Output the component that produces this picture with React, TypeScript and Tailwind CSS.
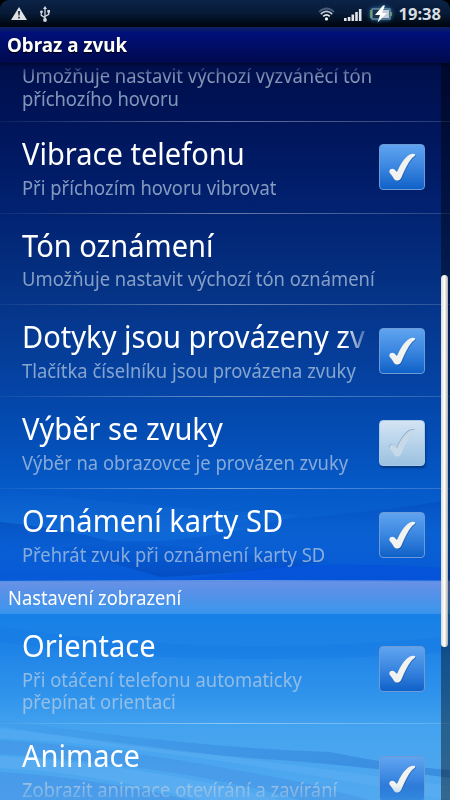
import React from "react";

type CheckState = "on" | "off";

function Wallpaper() {
  return (
    <svg className="absolute inset-0 h-full w-full" viewBox="0 0 450 800" preserveAspectRatio="none">
      <defs>
        <linearGradient id="sky" x1="0" y1="0" x2="0" y2="800" gradientUnits="userSpaceOnUse">
          <stop offset="0.08" stopColor="#000f4c" />
          <stop offset="0.15" stopColor="#001459" />
          <stop offset="0.25" stopColor="#01206e" />
          <stop offset="0.37" stopColor="#053386" />
          <stop offset="0.44" stopColor="#053d98" />
          <stop offset="0.5" stopColor="#0446a9" />
          <stop offset="0.56" stopColor="#0450b9" />
          <stop offset="0.61" stopColor="#0559c8" />
          <stop offset="0.66" stopColor="#0a61d0" />
          <stop offset="0.725" stopColor="#075ad8" />
          <stop offset="0.76" stopColor="#1580e8" />
          <stop offset="0.81" stopColor="#1e83e6" />
          <stop offset="0.87" stopColor="#3094ec" />
          <stop offset="0.91" stopColor="#44a3ef" />
          <stop offset="1" stopColor="#52a9ef" />
        </linearGradient>
        <linearGradient id="deep" x1="0" y1="0" x2="0" y2="1">
          <stop offset="0" stopColor="#0247b8" stopOpacity="0.5" />
          <stop offset="1" stopColor="#0753d0" stopOpacity="0.05" />
        </linearGradient>
        <linearGradient id="dip" x1="0" y1="0" x2="0" y2="1">
          <stop offset="0" stopColor="#0450c4" stopOpacity="0.1" />
          <stop offset="1" stopColor="#0349bd" stopOpacity="0.75" />
        </linearGradient>
        <linearGradient id="glow" x1="0" y1="0" x2="0" y2="1">
          <stop offset="0" stopColor="#2186e8" stopOpacity="0.02" />
          <stop offset="1" stopColor="#1a78e2" stopOpacity="0.35" />
        </linearGradient>
        <linearGradient id="shade" x1="0" y1="0" x2="1" y2="0.3">
          <stop offset="0" stopColor="#3587dc" stopOpacity="0.1" />
          <stop offset="1" stopColor="#3587dc" stopOpacity="0.75" />
        </linearGradient>
      </defs>
      <rect width="450" height="800" fill="url(#sky)" />
      <path d="M0 490 Q150 508 300 515 Q200 545 110 541 Q60 528 0 522Z" fill="url(#glow)" />
      <path d="M0 522 Q60 528 110 541 Q50 544 0 553Z" fill="url(#deep)" />
      <path d="M210 524 Q340 518 450 500 L450 530 Q320 542 210 524Z" fill="url(#deep)" />
      <path d="M60 548 Q110 538 130 541 Q220 552 330 562 Q240 574 160 577Z" fill="url(#dip)" />
      <path d="M270 566 Q360 562 450 568 L450 581 L160 581 Q230 576 270 566Z" fill="#034edb" fillOpacity="0.6" />
      <path d="M0 627 Q150 648 280 646 Q380 644 450 636 L450 652 Q200 670 0 642Z" fill="#0f78e4" fillOpacity="0.3" />
      <path d="M0 726 Q150 752 280 760 Q380 768 450 778 L450 770 Q400 766 330 752 Q200 748 0 720Z" fill="url(#shade)" />
      <path d="M0 728 Q200 752 450 786 L450 800 Q180 748 0 738Z" fill="#6ab7f4" fillOpacity="0.3" />
      <path d="M0 740 Q130 748 300 782 L370 800 L300 800 Q180 766 0 754Z" fill="#4085dc" fillOpacity="0.3" />
      <path d="M0 756 Q150 765 280 800 L200 800 Q90 772 0 768Z" fill="#68b5f5" fillOpacity="0.4" />
      <path d="M0 772 Q90 777 190 800 L0 800Z" fill="#3f88e2" fillOpacity="0.35" />
    </svg>
  );
}

function StatusBar() {
  return (
    <div className="bg-black">
      <header className="flex h-[27px] items-center justify-between rounded-t-[9px] bg-gradient-to-b from-[#0c2348] via-[#071a36] to-[#00060d] pr-[9px] pl-[11px]">
        <div className="flex items-center gap-[13px]">
          <svg className="h-[13px] w-[16px]" viewBox="0 0 16 13">
            <path d="M8 0 L16 13 H0Z" fill="#dfe1e4" />
            <path d="M7 4 H9 L8.6 8.6 H7.4Z M7.2 9.8 H8.8 V11.4 H7.2Z" fill="#222b38" />
          </svg>
          <svg className="h-[16px] w-[10px]" viewBox="0 0 10 16" fill="none" stroke="#d5d9de" strokeWidth="1.3">
            <path d="M5 2 V14 M5 11.8 L1.3 9.3 V6 M5 10.5 L8.7 8.3 V5" />
            <path d="M5 0 L7 3 H3Z" fill="#d5d9de" stroke="none" />
            <circle cx="5" cy="14" r="1.9" fill="#d5d9de" stroke="none" />
            <circle cx="1.5" cy="5.8" r="1.4" fill="#d5d9de" stroke="none" />
            <path d="M7.3 4 H10 V6.7 H7.3Z" fill="#d5d9de" stroke="none" />
          </svg>
        </div>
        <div className="flex items-center">
          <svg className="mr-[9px] h-[14px] w-[17px]" viewBox="0 0 17 14" fill="none" strokeWidth="1.7">
            <path d="M1 5 Q8.5 -2 16 5" stroke="#485b78" />
            <path d="M2.8 7 Q8.5 1.8 14.2 7" stroke="#bcc6d0" />
            <path d="M5.2 9.3 Q8.5 6.4 11.8 9.3" stroke="#e5e9ed" />
            <circle cx="8.5" cy="11.9" r="1.6" fill="#f3f5f6" />
          </svg>
          <svg className="mt-[3px] mr-[6px] h-[12px] w-[18px]" viewBox="0 0 18 12" fill="#e2e5e9">
            <path d="M0 9h2.6v3H0z M3.8 8h2.6v4H3.8z M7.5 5.5h2.6V12H7.5z M11.2 3h2.6v9h-2.6z M14.9 0h2.6v12h-2.6z" />
          </svg>
          <svg className="mr-[5px] h-[18px] w-[26px] drop-shadow-[0_0_2px_#3886bd]" viewBox="0 0 26 18">
            <rect x="4" y="4" width="18" height="10" fill="#17324b" stroke="#84abbd" />
            <path d="M14 5h7v8h-8z" fill="#bfc9df" />
            <path d="M3 5v8M23 7v4" stroke="#74a56c" strokeWidth="1.6" />
            <path d="M15 0.5 L7 10 H12 L9.5 17.5 L19 8 H14 L17 0.5Z" fill="#fff" />
          </svg>
          <span className="text-[16.5px] leading-[26px] font-bold text-[#d6dde0]">19:38</span>
        </div>
      </header>
    </div>
  );
}

const TICK =
  "M10.4 27 C10.8 25 13.5 24 15.5 25.6 L18 28 C21 21 25.5 13.5 30.5 10.7 C32.8 9.5 35.5 9.2 36.4 10.4 C36.5 11.5 34.5 12.5 33 14 C28.5 19.5 25.5 26.5 22.8 32.5 C21.8 35.2 20.5 36.6 18.5 36.6 C16.2 36.6 15.2 35.4 14 33.2 C12.8 31 12 30.3 11.2 29.4 C10.5 28.6 10.2 28 10.4 27Z";

function CheckBox({ state }: { state: CheckState }) {
  const on = state === "on";
  return (
    <div
      className={
        on
          ? "h-[46px] w-[46px] shrink-0 rounded-[4px] border border-[#6c9bd6] bg-gradient-to-b from-[#5fa4f0] via-[#3a86e0] to-[#0c61c8]"
          : "h-[46px] w-[46px] shrink-0 rounded-[4px] border border-[#a9c9e6] bg-gradient-to-b from-[#d3e4f4] to-[#9bc1e0] shadow-[1px_2px_2px_#043a86]"
      }
    >
      <svg className="h-full w-full" viewBox="1 1 44 44">
        {on ? (
          <path d={TICK} fill="#174d91" fillOpacity="0.45" transform="translate(.8 .8)" />
        ) : (
          <path d={TICK} fill="#8eabc6" transform="translate(-.5 -.6)" />
        )}
        <path d={TICK} fill={on ? "#f2f2f0" : "#c6d9e8"} />
      </svg>
    </div>
  );
}

interface RowProps {
  title: string;
  lines: string[];
  check?: CheckState;
  height: string;
}

function Row({ title, lines, check, height }: RowProps) {
  return (
    <div className={`${height} flex shrink-0 flex-col`}>
      <div className="flex min-h-0 flex-1 items-center pr-[25px] pl-[22px]">
        <div className="h-full min-w-0 flex-1 pt-[10px]">
          <div className="w-[344px] overflow-hidden [mask-image:linear-gradient(to_right,black_322px,transparent_350px)]">
            <div className="w-max origin-left scale-x-[0.941] text-[30.9px] leading-[42px] whitespace-nowrap text-white">
              {title}
            </div>
          </div>
          <div className="mt-[2.5px] flex flex-col items-start">
            {lines.map((line) => (
              <SubLine key={line} text={line} />
            ))}
          </div>
        </div>
        {check && <CheckBox state={check} />}
      </div>
      <Divider />
    </div>
  );
}

function SubLine({ text }: { text: string }) {
  return (
    <div className="w-max origin-left scale-x-[0.934] text-[19.7px] leading-[22.7px] whitespace-nowrap text-[#bccfe2]/70">
      {text}
    </div>
  );
}

function Divider() {
  return <div className="h-px shrink-0 bg-gradient-to-r from-white/5 via-white/40 to-white/15" />;
}

export default function App() {
  return (
    <div className="relative isolate flex h-[800px] w-[450px] flex-col overflow-hidden bg-[#001050] font-['Noto_Sans','Open_Sans',sans-serif]">
      <div className="absolute inset-0 -z-10">
        <Wallpaper />
      </div>
      <StatusBar />
      <h1 className="h-[36px] shrink-0 bg-gradient-to-b from-[#10205f] via-[#00107a] via-15% to-[#000a4e] pl-[7px] text-[19.7px] leading-[35px] font-bold text-white shadow-[0_1px_4px_#000420]">
        <span className="inline-block origin-left scale-x-[0.955] [text-shadow:0_1px_1px_#000]">Obraz a zvuk</span>
      </h1>
      <main className="relative min-h-0 flex-1 overflow-hidden">
        <div className="flex h-full flex-col overflow-hidden [mask-image:linear-gradient(to_bottom,transparent_0,black_14px,black_722px,transparent_748px)]">
          <div className="flex h-[59px] shrink-0 flex-col justify-end">
            <div className="mb-[10.5px] pl-[22px]">
              <SubLine text="Umožňuje nastavit výchozí vyzváněcí tón" />
              <SubLine text="příchozího hovoru" />
            </div>
            <Divider />
          </div>
          <Row height="h-[91.5px]" title="Vibrace telefonu" lines={["Při příchozím hovoru vibrovat"]} check="on" />
          <Row height="h-[91.5px]" title="Tón oznámení" lines={["Umožňuje nastavit výchozí tón oznámení"]} />
          <Row height="h-[92px]" title="Dotyky jsou provázeny zvuky" lines={["Tlačítka číselníku jsou provázena zvuky"]} check="on" />
          <Row height="h-[92px]" title="Výběr se zvuky" lines={["Výběr na obrazovce je provázen zvuky"]} check="off" />
          <Row height="h-[92px]" title="Oznámení karty SD" lines={["Přehrát zvuk při oznámení karty SD"]} check="on" />
          <div className="h-[33px] shrink-0 border-t border-white/20 bg-gradient-to-b from-[#c8c8f4]/50 to-white/15 pl-[8px] text-[19.7px] leading-[32px] text-white">
            <span className="inline-block origin-left scale-x-[0.928]">Nastavení zobrazení</span>
          </div>
          <Row height="h-[110.4px]" title="Orientace" lines={["Při otáčení telefonu automaticky", "přepínat orientaci"]} check="on" />
          <Row height="h-[110px]" title="Animace" lines={["Zobrazit animace otevírání a zavírání"]} check="on" />
        </div>
        <div className="absolute inset-y-0 right-0 w-[9px] bg-black/40">
          <div className="mt-[212px] h-[372px] w-[7px] rounded-full bg-gradient-to-r from-[#d8d8da] via-white to-[#a8aaa6]" />
        </div>
      </main>
    </div>
  );
}
